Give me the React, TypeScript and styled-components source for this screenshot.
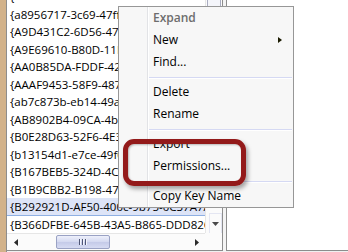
import React from "react";
import styled, { createGlobalStyle } from "styled-components";

const Global = createGlobalStyle`
  html, body { margin: 0; padding: 0; }
  body {
    width: 348px; height: 252px; overflow: hidden;
    font-family: "Open Sans", "Noto Sans", sans-serif;
    background: #f0f0f0;
  }
`;

const Page = styled.div`
  position: relative;
  display: flex;
  width: 348px;
  height: 252px;
  overflow: hidden;
`;

const TanStrip = styled.div`
  width: 6px;
  flex: none;
  background: #d2b28a;
  border-right: 1px solid #8d8d8d;
`;

const ListPanel = styled.div`
  width: 215px;
  flex: none;
  height: 250px;
  display: grid;
  grid-template-columns: 1fr 17px;
  grid-template-rows: 1fr 17px;
  background: #fff;
  border-right: 1px solid #8d8d8d;
  border-bottom: 1px solid #8d8d8d;
`;

const ListBody = styled.div`
  overflow: hidden;
  padding-left: 3px;
  padding-top: 0;
`;

const Rows = styled.div`
  margin-top: -11.75px;
`;

const Row = styled.div<{ $selected?: boolean }>`
  height: 17.5px;
  line-height: 17.5px;
  font-size: 11.5px;
  color: #000;
  white-space: nowrap;
  box-sizing: border-box;
  margin-left: -3px;
  padding-left: 3px;
  background: ${(p) => (p.$selected ? "#dde4f7" : "transparent")};
  box-shadow: ${(p) => (p.$selected ? "inset 0 -1px 0 #8fb0e3" : "none")};
`;

const VScroll = styled.div`
  display: flex;
  flex-direction: column;
  background: #fbfbfb;
  border-left: 1px solid #e6e6e6;
`;

const VThumb = styled.div`
  height: 40px;
  margin: 0 1px;
  border-left: 1px solid #a9acc0;
  border-right: 1px solid #a9acc0;
  background: #f4f5fa;
`;

const VTrack = styled.div`
  flex: 1;
`;

const ArrowBtn = styled.div`
  height: 17px;
  display: flex;
  align-items: center;
  justify-content: center;
  box-sizing: border-box;
`;

const DownBtn = styled(ArrowBtn)`
  height: 20px;
  margin: 0 0 0 3px;
  border: 1px solid #e4e6f2;
  border-bottom: none;
`;

const HScroll = styled.div`
  display: flex;
  align-items: stretch;
  background: #fbfbfb;
  border-top: 1px solid #e6e6e6;
`;

const HBtn = styled.div`
  width: 17px;
  display: flex;
  align-items: center;
  justify-content: center;
`;

const HTrack = styled.div`
  flex: 1;
  display: flex;
  align-items: center;
  padding-left: 32px;
`;

const HThumb = styled.div`
  width: 54px;
  height: 14px;
  box-sizing: border-box;
  border: 1px solid #9aa2c4;
  border-radius: 2px;
  background: linear-gradient(#eef0fb, #d3d8f0 50%, #c4cae8 51%, #d6dbf2);
  display: flex;
  align-items: center;
  justify-content: center;
  gap: 1px;
`;

const Grip = styled.span`
  width: 1px;
  height: 6px;
  background: #4f5675;
  box-shadow: 1px 0 0 #f3f4fb;
  margin-right: 1px;
`;

const Corner = styled.div`
  background: #fbfbfb;
`;

const Splitter = styled.div`
  width: 3px;
  flex: none;
  background: #f4f4f4;
`;

const RightPanel = styled.div`
  flex: 1;
  height: 250px;
  background: #fff;
  border-left: 1px solid #8d8d8d;
  border-bottom: 1px solid #8d8d8d;
`;

const Menu = styled.div`
  position: absolute;
  left: 118px;
  top: 6px;
  width: 174px;
  background: #f7f7f7;
  border: 1px solid #979797;
  font-size: 12px;
  color: #000;
  display: flex;
  flex-direction: column;
  &::before {
    content: "";
    position: absolute;
    top: 0;
    bottom: 0;
    left: 28px;
    width: 1px;
    background: #e2e3e6;
    box-shadow: 1px 0 0 #ffffff;
  }
`;

const Item = styled.div<{ $default?: boolean; $disabled?: boolean }>`
  height: 22px;
  line-height: 22px;
  padding-left: 34px;
  position: relative;
  white-space: nowrap;
  font-weight: ${(p) => (p.$default ? 600 : 400)};
  color: ${(p) => (p.$disabled ? "#6d6d6d" : "#000")};
`;

const SubArrow = styled.span`
  position: absolute;
  right: 11px;
  top: 8px;
  width: 0;
  height: 0;
  border-top: 3.5px solid transparent;
  border-bottom: 3.5px solid transparent;
  border-left: 4px solid #1a1a00;
`;

const Separator = styled.div`
  height: 8px;
  display: flex;
  align-items: center;
  padding-left: 30px;
  padding-right: 1px;
  &::after {
    content: "";
    flex: 1;
    height: 1px;
    background: #d5d9f3;
    box-shadow: 0 1px 0 #ffffff;
  }
`;

const Highlight = styled.div`
  position: absolute;
  left: 123px;
  top: 139px;
  width: 123px;
  height: 47px;
  box-sizing: border-box;
  border: 5px solid #931a1a;
  border-radius: 11px;
  box-shadow: 2px 3px 4px rgba(0, 0, 0, 0.35), inset 1px 1px 2px rgba(0, 0, 0, 0.25);
`;

const rows = [
  "{",
  "{a8956717-3c69-47ff-9e4b-1d2c5f8a0b31}",
  "{A9D431C2-6D56-4726-8C3F-2B1E0A9D7F44}",
  "{A9E69610-B80D-11D0-B9B9-00A0C922E750}",
  "{AA0B85DA-FDDF-4272-8D1D-FF9B966D75B0}",
  "{AAAF9453-58F9-4872-9B3A-4C7E1D2F6A08}",
  "{ab7c873b-eb14-49a0-8f6e-3d2b1c9a7e55}",
  "{AB8902B4-09CA-4bb6-B78D-A8F59079A8D5}",
  "{B0E28D63-52F6-4E30-9C1A-7F2D4B8E6C12}",
  "{b13154d1-e7ce-49f0-8a3b-5c6d7e8f9a01}",
  "{B167BEB5-324D-4C2A-9E1F-0A3B5C7D9E2F}",
  "{B1B9CBB2-B198-47E2-8260-9FD629A2B2EC}",
  "{B292921D-AF50-400c-9b75-0C37A7A8F0B9}",
  "{B366DFBE-645B-43A5-B865-DDD82C345C19}",
  "{B3A8B0E4-7C21-4D6E-9F0A-1B2C3D4E5F60}",
];

function ArrowLeft() {
  return (
    <svg width="4" height="7" viewBox="0 0 4 7">
      <path d="M4 0 L0 3.5 L4 7 Z" fill="#2b2b2b" />
    </svg>
  );
}
function ArrowRight() {
  return (
    <svg width="4" height="7" viewBox="0 0 4 7">
      <path d="M0 0 L4 3.5 L0 7 Z" fill="#2b2b2b" />
    </svg>
  );
}
function ArrowDown() {
  return (
    <svg width="7" height="4" viewBox="0 0 7 4">
      <path d="M0 0 L7 0 L3.5 4 Z" fill="#4a4a4a" />
    </svg>
  );
}

export default function App() {
  return (
    <>
      <Global />
      <Page>
        <TanStrip />
        <ListPanel>
          <ListBody>
            <Rows>
              {rows.map((r, i) => (
                <Row key={i} $selected={i === 12}>
                  {r}
                </Row>
              ))}
            </Rows>
          </ListBody>
          <VScroll>
            <VThumb />
            <VTrack />
            <DownBtn>
              <ArrowDown />
            </DownBtn>
          </VScroll>
          <HScroll>
            <HBtn>
              <ArrowLeft />
            </HBtn>
            <HTrack>
              <HThumb>
                <Grip />
                <Grip />
                <Grip />
              </HThumb>
            </HTrack>
            <HBtn>
              <ArrowRight />
            </HBtn>
          </HScroll>
          <Corner />
        </ListPanel>
        <Splitter />
        <RightPanel />
        <Menu>
          <Item $default $disabled>Expand</Item>
          <Item>
            New
            <SubArrow />
          </Item>
          <Item>Find...</Item>
          <Separator />
          <Item>Delete</Item>
          <Item>Rename</Item>
          <Separator />
          <Item>Export</Item>
          <Item>Permissions...</Item>
          <Separator />
          <Item>Copy Key Name</Item>
        </Menu>
        <Highlight />
      </Page>
    </>
  );
}
